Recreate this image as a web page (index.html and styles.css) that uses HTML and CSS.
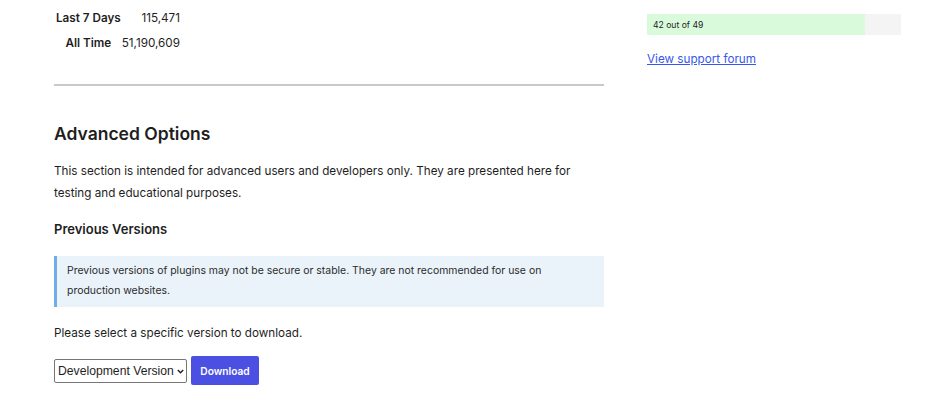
FILE: index.html
```html
<!DOCTYPE html>
<html lang="en">
<head>
<meta charset="utf-8">
<title>Advanced Options</title>
<link rel="stylesheet" href="styles.css">
</head>
<body>
<div class="page">
  <main class="main">
    <table class="stats">
      <tr><th>Last 7 Days</th><td>115,471</td></tr>
      <tr><th>All Time</th><td>51,190,609</td></tr>
    </table>
    <hr class="rule">
    <h2 class="title">Advanced Options</h2>
    <p class="text">This section is intended for advanced users and developers only. They are presented here for testing and educational purposes.</p>
    <h3 class="subtitle">Previous Versions</h3>
    <div class="notice">Previous versions of plugins may not be secure or stable. They are not recommended for use on production websites.</div>
    <p class="text select-hint">Please select a specific version to download.</p>
    <div class="download-row">
      <div class="select-wrap">
        <select class="version">
          <option>Development Version</option>
        </select>
        <svg class="chev" width="7" height="5" viewBox="0 0 7 5" aria-hidden="true"><path d="M0.8 1 L3.5 3.7 L6.2 1" fill="none" stroke="#1e1e1e" stroke-width="1.4"/></svg>
      </div>
      <button class="btn" type="button">Download</button>
    </div>
  </main>
  <aside class="side">
    <div class="bar"><div class="bar-fill" style="width:85.7%"><span>42 out of 49</span></div></div>
    <a class="forum" href="#">View support forum</a>
  </aside>
</div>
</body>
</html>
```
FILE: styles.css
```css
html, body {
  margin: 0;
  padding: 0;
  background: #fff;
}
body {
  font-family: Inter, "Noto Sans", sans-serif;
  color: #1e1e1e;
  font-size: 11.7px;
}
.page {
  display: flex;
  padding-left: 54px;
  gap: 43px;
}
.main {
  width: 550px;
  flex: none;
}
.stats {
  border-collapse: collapse;
  margin-top: 6px;
}
.stats th, .stats td {
  height: 25px;
  padding: 0;
  font-size: 11.7px;
  line-height: 25px;
}
.stats th {
  font-weight: 600;
  text-align: center;
  padding: 0 1px 0 2px;
}
.stats td {
  text-align: right;
  padding-left: 0;
}
.rule {
  margin: 28px 0 0 0;
  border: 0;
  border-top: 2px solid #c9c9c9;
  height: 0;
}
.title {
  margin: 35px 0 0 0;
  font-size: 17.5px;
  line-height: 26px;
  font-weight: 600;
}
.text {
  margin: 13px 0 0 0;
  font-size: 11.7px;
  line-height: 22px;
}
.subtitle {
  margin: 15px 0 0 0;
  font-size: 13px;
  line-height: 20px;
  font-weight: 600;
}
.notice {
  margin-top: 17px;
  background: #eaf3fa;
  border-left: 3px solid #72aee6;
  padding: 5px 40px 6px 10px;
  font-size: 10.45px;
  line-height: 20px;
  color: #2c2c2c;
}
.select-hint {
  margin-top: 15px;
}
.download-row {
  display: flex;
  align-items: center;
  gap: 4px;
  margin-top: 12px;
}
.select-wrap {
  position: relative;
  display: flex;
}
.version {
  appearance: none;
  -webkit-appearance: none;
  height: 24px;
  width: 133px;
  font-family: "Liberation Sans", Arial, sans-serif;
  font-size: 12.2px;
  color: #1e1e1e;
  border: 1px solid #767676;
  border-radius: 2px;
  background: #fff;
  padding: 0 0 0 3px;
  margin: 0;
}
.chev {
  position: absolute;
  right: 3px;
  top: 10px;
  pointer-events: none;
}
.btn {
  height: 29px;
  width: 68px;
  padding: 0;
  background: #4b4fe2;
  color: #fff;
  border: 0;
  border-radius: 2px;
  font-family: Inter, "Noto Sans", sans-serif;
  font-weight: 600;
  font-size: 10.2px;
}
.side {
  width: 254px;
  flex: none;
  padding-top: 14px;
}
.bar {
  height: 21px;
  background: #f4f4f4;
}
.bar-fill {
  height: 21px;
  background: #d9fbdc;
  display: flex;
  align-items: center;
  padding-left: 6px;
  box-sizing: border-box;
  font-size: 8.6px;
  color: #1e1e1e;
}
.forum {
  display: inline-block;
  margin-top: 15px;
  color: #3858e9;
  font-size: 11.7px;
  line-height: 18px;
  text-decoration: underline;
}
```
